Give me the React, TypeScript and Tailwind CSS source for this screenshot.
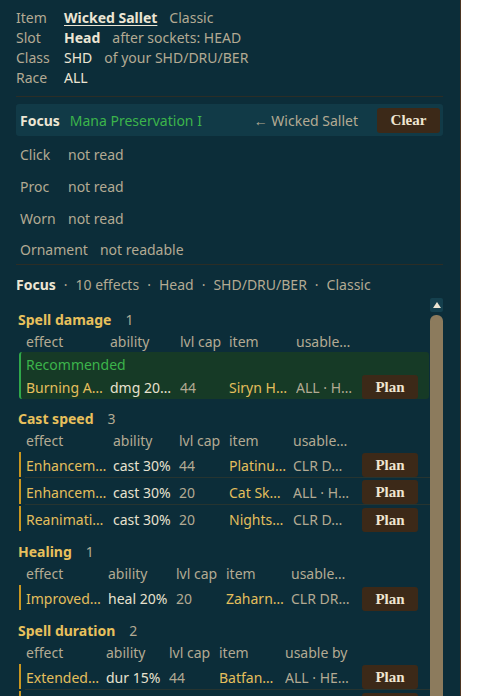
import React from 'react';

type Row = { effect: string; ability: string; cap: string; item: string; usable: string };

type Section = {
  title: string;
  count: number;
  cols: string;
  usableLabel: string;
  recommended?: boolean;
  rows: Row[];
};

const sections: Section[] = [
  {
    title: 'Spell damage',
    count: 1,
    cols: 'grid-cols-[84px_70px_49px_67px_66px_56px]',
    usableLabel: 'usable…',
    recommended: true,
    rows: [{ effect: 'Burning A…', ability: 'dmg 20…', cap: '44', item: 'Siryn H…', usable: 'ALL · H…' }],
  },
  {
    title: 'Cast speed',
    count: 3,
    cols: 'grid-cols-[87px_66px_50px_64px_69px_56px]',
    usableLabel: 'usable…',
    rows: [
      { effect: 'Enhancem…', ability: 'cast 30%', cap: '44', item: 'Platinu…', usable: 'CLR D…' },
      { effect: 'Enhancem…', ability: 'cast 30%', cap: '20', item: 'Cat Sk…', usable: 'ALL · H…' },
      { effect: 'Reanimati…', ability: 'cast 30%', cap: '20', item: 'Nights…', usable: 'CLR D…' },
    ],
  },
  {
    title: 'Healing',
    count: 1,
    cols: 'grid-cols-[82px_68px_50px_65px_71px_56px]',
    usableLabel: 'usable…',
    rows: [{ effect: 'Improved…', ability: 'heal 20%', cap: '20', item: 'Zaharn…', usable: 'CLR DR…' }],
  },
  {
    title: 'Spell duration',
    count: 2,
    cols: 'grid-cols-[80px_63px_50px_66px_77px_56px]',
    usableLabel: 'usable by',
    rows: [
      { effect: 'Extended…', ability: 'dur 15%', cap: '44', item: 'Batfan…', usable: 'ALL · HE…' },
      { effect: 'Extended…', ability: 'dur 15%', cap: '20', item: 'Cloak o…', usable: 'CLR D…' },
    ],
  },
];

const cell = 'whitespace-nowrap overflow-hidden text-ellipsis';

const PlanButton = () => (
  <button className="h-6 w-[56px] rounded-[3px] bg-[#3c2918] text-[#efe6d2] font-['Liberation_Serif',serif] font-bold text-[15px] leading-6">
    Plan
  </button>
);

const EffectRow = ({ row, cols, last, bar }: { row: Row; cols: string; last: boolean; bar: string }) => (
  <div className="flex h-[27px] ml-[3px]">
    <div className={`w-[2px] my-[1px] ${bar}`} />
    <div className={`grid ${cols} items-center ml-[4px] pl-[1px] pt-[2px] flex-1 ${last ? '' : 'border-b border-[#263430]'}`}>
      <span className={`${cell} text-[#e4bf5c]`}>{row.effect}</span>
      <span className={`${cell} text-[#e7e1cf]`}>{row.ability}</span>
      <span className={`${cell} text-[#b3aa93]`}>{row.cap}</span>
      <span className={`${cell} text-[#e4bf5c]`}>{row.item}</span>
      <span className={`${cell} text-[#b3aa93]`}>{row.usable}</span>
      <PlanButton />
    </div>
  </div>
);

const EffectSection = ({ s }: { s: Section }) => (
  <div>
    <div className="h-[21px] leading-[21px] pl-[2px] flex gap-[14px]">
      <span className="font-bold text-[#e8c05c]">{s.title}</span>
      <span className="text-[#b3aa93]">{s.count}</span>
    </div>
    <div className={`grid ${s.cols} h-[22px] items-center pl-[10px] text-[#b3aa93]`}>
      <span>effect</span>
      <span>ability</span>
      <span>lvl cap</span>
      <span>item</span>
      <span className={cell}>{s.usableLabel}</span>
    </div>
    {s.recommended ? (
      <div className="ml-[3px] mr-[1px] rounded-[3px] bg-[#163a26] border-l-2 border-[#2fa84a] pt-[3px]">
        <div className="h-5 leading-5 pl-[5px] text-[#3cb44b]">Recommended</div>
        {s.rows.map((r, i) => (
          <div key={i} className={`grid ${s.cols} h-6 items-center pl-[5px]`}>
            <span className={`${cell} text-[#e4bf5c]`}>{r.effect}</span>
            <span className={`${cell} text-[#e7e1cf]`}>{r.ability}</span>
            <span className={`${cell} text-[#b3aa93]`}>{r.cap}</span>
            <span className={`${cell} text-[#e4bf5c]`}>{r.item}</span>
            <span className={`${cell} text-[#b3aa93]`}>{r.usable}</span>
            <PlanButton />
          </div>
        ))}
      </div>
    ) : (
      s.rows.map((r, i) => (
        <EffectRow key={i} row={r} cols={s.cols} last={i === s.rows.length - 1} bar="bg-[#c9961f]" />
      ))
    )}
  </div>
);

const App = () => {
  return (
    <div className="w-[461px] h-[696px] overflow-hidden bg-[#0c2d39] border-r border-[#4b3522] font-['Noto_Sans',sans-serif] text-[14px] text-[#b3aa93]">
      <div className="pl-4 pr-[17px] pt-2">
        {/* Item summary */}
        <div className="leading-5">
          <div className="flex">
            <span className="w-12">Item</span>
            <span className="font-bold text-[#ece6d4] underline underline-offset-2">Wicked Sallet</span>
            <span className="ml-3">Classic</span>
          </div>
          <div className="flex">
            <span className="w-12">Slot</span>
            <span className="font-bold text-[#ece6d4]">Head</span>
            <span className="ml-3">after sockets: HEAD</span>
          </div>
          <div className="flex">
            <span className="w-12">Class</span>
            <span className="text-[#ece6d4]">SHD</span>
            <span className="ml-3">of your SHD/DRU/BER</span>
          </div>
          <div className="flex">
            <span className="w-12">Race</span>
            <span className="text-[#ece6d4]">ALL</span>
          </div>
        </div>

        <div className="mt-2 h-px bg-[#2b2d26]" />

        {/* Focus bar */}
        <div className="mt-[7px] h-8 rounded-[3px] bg-[#113a47] flex items-center pl-1 pr-[3px]">
          <span className="font-bold text-[#ece6d4]">Focus</span>
          <span className="ml-[10px] text-[#3cb44b]">Mana Preservation I</span>
          <span className="ml-auto">← Wicked Sallet</span>
          <button className="ml-[19px] h-[25px] w-[63px] rounded-[3px] bg-[#3c2918] text-[#efe6d2] font-['Liberation_Serif',serif] font-bold text-[15px]">
            Clear
          </button>
        </div>

        {/* Slots */}
        <div className="mt-[2px] pl-1">
          <div className="h-8 flex items-center gap-3">
            <span className="min-w-[36px]">Click</span>
            <span>not read</span>
          </div>
          <div className="h-8 flex items-center gap-3">
            <span className="min-w-[36px]">Proc</span>
            <span>not read</span>
          </div>
          <div className="h-8 flex items-center gap-3">
            <span className="min-w-[36px]">Worn</span>
            <span>not read</span>
          </div>
          <div className="h-[30px] flex items-center gap-3">
            <span className="min-w-[36px]">Ornament</span>
            <span>not readable</span>
          </div>
        </div>

        <div className="h-px bg-[#2b2d26]" />

        <div className="mt-[10px] h-5 leading-5 flex">
          <span className="font-bold text-[#ece6d4]">Focus</span>
          <span className="mx-2">·</span>
          <span>10 effects</span>
          <span className="mx-2">·</span>
          <span>Head</span>
          <span className="mx-2">·</span>
          <span>SHD/DRU/BER</span>
          <span className="mx-2">·</span>
          <span>Classic</span>
        </div>

        {/* Effects list */}
        <div className="mt-px flex h-[400px]">
          <div className="flex-1 pt-[13px] flex flex-col gap-[9px] overflow-hidden">
            {sections.map((s) => (
              <EffectSection key={s.title} s={s} />
            ))}
          </div>
          <div className="w-[13px] pt-[2px] flex flex-col gap-[3px]">
            <div className="h-[14px] rounded-[2px] bg-[#15404e] flex items-center justify-center">
              <svg width="8" height="6" viewBox="0 0 8 6">
                <path d="M4 0 L8 6 L0 6 Z" fill="#ece6d4" />
              </svg>
            </div>
            <div className="flex-1 rounded-t-[6px] bg-[#8c7b5d]" />
          </div>
        </div>
      </div>
    </div>
  );
};

export default App;
